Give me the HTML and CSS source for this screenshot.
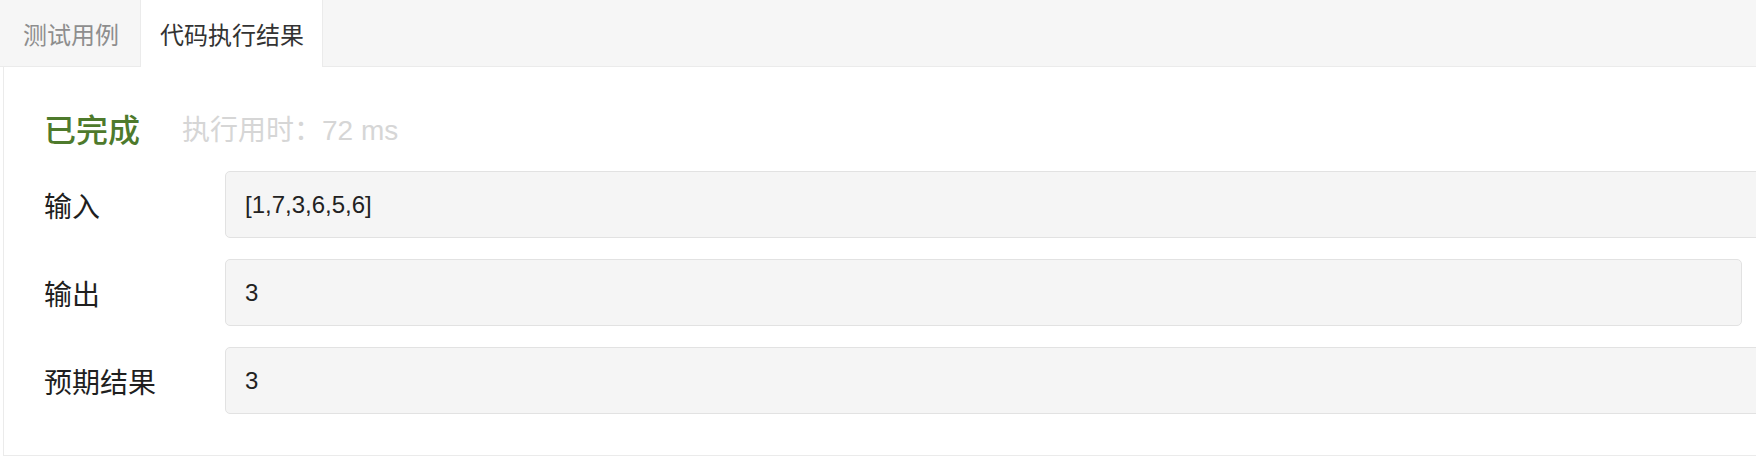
FILE: index.html
```html
<!DOCTYPE html>
<html lang="zh-CN">
<head>
<meta charset="utf-8">
<title>代码执行结果</title>
<link rel="stylesheet" href="styles.css">
</head>
<body>
<div class="tabs">
  <div class="tab">测试用例</div>
  <div class="tab active">代码执行结果</div>
</div>
<div class="panel">
  <div class="status">
    <span class="done">已完成</span>
    <span class="meta">执行用时：72 ms</span>
  </div>
  <div class="row">
    <div class="label">输入</div>
    <div class="box wide">[1,7,3,6,5,6]</div>
  </div>
  <div class="row">
    <div class="label">输出</div>
    <div class="box">3</div>
  </div>
  <div class="row">
    <div class="label">预期结果</div>
    <div class="box wide">3</div>
  </div>
</div>
</body>
</html>
```

FILE: styles.css
```css
html, body {
  margin: 0;
  padding: 0;
  background: #fff;
  overflow: hidden;
}
body {
  width: 1756px;
  height: 458px;
  font-family: "Liberation Sans", "Noto Sans CJK SC", sans-serif;
  color: #222;
}
.tabs {
  display: flex;
  height: 66px;
  background: #f6f6f6;
  border-bottom: 1px solid #ebebeb;
  padding-left: 3px;
}
.tab {
  display: flex;
  align-items: center;
  padding: 0 21px 0 20px;
  font-size: 24px;
  color: #8e8e8e;
}
.tab.active {
  background: #fff;
  color: #333;
  border-left: 1px solid #ebebeb;
  border-right: 1px solid #ebebeb;
  margin-bottom: -1px;
  padding: 0 18px 0 19px;
}
.panel {
  margin-left: 3px;
  border-left: 1px solid #ebebeb;
  border-bottom: 1px solid #ebebeb;
  padding: 44px 14px 41px 40px;
  display: flex;
  flex-direction: column;
  gap: 21px;
}
.status {
  height: 39px;
  display: flex;
  align-items: center;
  gap: 42px;
}
.done {
  font-size: 32px;
  font-weight: 500;
  color: #4e7a2c;
  line-height: 1;
}
.meta {
  font-size: 28px;
  color: #d6d6d6;
  line-height: 1;
}
.row {
  display: flex;
  align-items: center;
}
.label {
  width: 181px;
  flex: none;
  font-size: 28px;
  color: #1f1f1f;
}
.box {
  flex: 1;
  height: 65px;
  display: flex;
  align-items: center;
  padding-left: 19px;
  background: #f5f5f5;
  border: 1px solid #e2e2e2;
  border-radius: 5px;
  font-size: 24px;
  color: #222;
}
.box.wide {
  margin-right: -40px;
}
```
